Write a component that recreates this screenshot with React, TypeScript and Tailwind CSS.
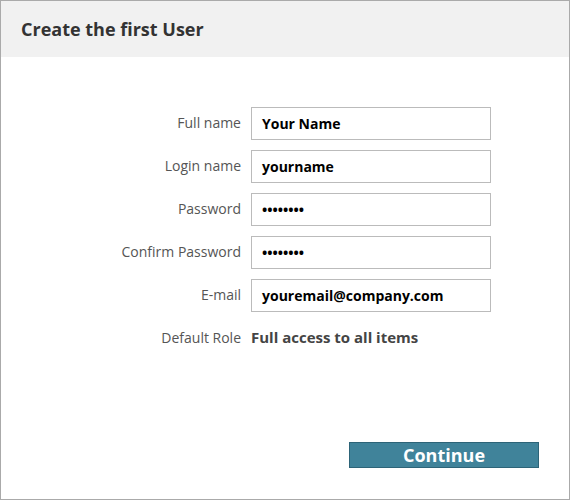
import React from 'react';

const font = { fontFamily: '"Open Sans", "Noto Sans", sans-serif' };

const rows: { label: string; value: string; kind: 'input' | 'text' }[] = [
    { label: 'Full name', value: 'Your Name', kind: 'input' },
    { label: 'Login name', value: 'yourname', kind: 'input' },
    { label: 'Password', value: '••••••••', kind: 'input' },
    { label: 'Confirm Password', value: '••••••••', kind: 'input' },
    { label: 'E-mail', value: 'youremail@company.com', kind: 'input' },
    { label: 'Default Role', value: 'Full access to all items', kind: 'text' },
];

export default function App() {
    return (
        <div className="w-[570px] h-[500px] bg-white border border-[#aaaaaa] flex flex-col" style={font}>
            <div className="h-[56px] bg-[#f1f1f1] flex items-center pl-[20px]">
                <h1 className="text-[18px] font-bold text-[#333333]">Create the first User</h1>
            </div>

            <div className="mt-[50px] grid grid-cols-[240px_240px] gap-x-[10px] gap-y-[10px]">
                {rows.map(r => (
                    <React.Fragment key={r.label}>
                        <div className="h-[33px] flex items-center justify-end pb-[2px] text-[14px] text-[#555555]">{r.label}</div>
                        {r.kind === 'input' ? (
                            <div className="h-[33px] border border-[#bbbbbb] flex items-center pl-[10px] text-[14px] font-bold text-black">
                                {r.value}
                            </div>
                        ) : (
                            <div className="h-[33px] flex items-center pb-[2px] text-[15px] font-bold text-[#444444]">{r.value}</div>
                        )}
                    </React.Fragment>
                ))}
            </div>

            <div className="mt-auto flex justify-end pr-[30px] pb-[31px]">
                <button className="w-[190px] h-[26px] bg-[#40839a] border border-[#2d6478] text-white text-[18px] font-bold leading-none flex items-center justify-center">
                    Continue
                </button>
            </div>
        </div>
    );
}
